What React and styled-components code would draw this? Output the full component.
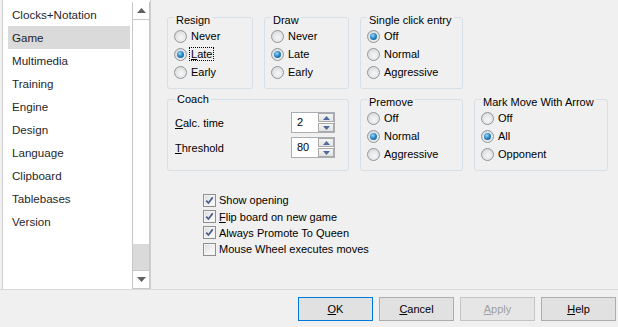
import React from 'react';
import styled, { createGlobalStyle, css } from 'styled-components';

const Global = createGlobalStyle`
  html, body {
    margin: 0;
    background: #f0f0f0;
    font-family: "Liberation Sans", Arial, sans-serif;
    font-size: 11px;
    color: #000;
  }
`;

const Window = styled.div`
  width: 618px;
  height: 327px;
  display: flex;
  flex-direction: column;
  overflow: hidden;
`;

const Main = styled.div`
  display: flex;
  height: 289px;
`;

const ListBox = styled.div`
  box-sizing: border-box;
  width: 149px;
  margin-left: 2px;
  border-left: 1px solid #cfcfcf;
  border-right: 1px solid #cfcfcf;
  background: #fff;
  display: flex;
`;

const Items = styled.div`
  width: 129px;
  box-sizing: border-box;
  padding: 3px 2px 0 5px;
  font-size: 11.6px;
`;

const Item = styled.div`
  height: 23px;
  line-height: 23px;
  padding-left: 4px;
  color: #1f1f2a;
  ${p => p.$selected && css`
    background: #dadada;
  `}
`;

const ScrollBar = styled.div`
  box-sizing: border-box;
  width: 18px;
  margin-top: 2px;
  border-left: 1px solid #c8c8c8;
  border-right: 1px solid #c8c8c8;
  display: flex;
  flex-direction: column;
`;

const ScrollButton = styled.div`
  height: 17px;
  display: flex;
  align-items: center;
  justify-content: center;
  border-top: 1px solid #c8c8c8;
  border-bottom: 1px solid #c8c8c8;
  ${p => p.$top && css`border-top: none;`}
`;

const Track = styled.div`
  flex: 1;
  display: flex;
  flex-direction: column;
  justify-content: flex-end;
`;

const Thumb = styled.div`
  height: 26px;
  background: #dadada;
`;

const Panel = styled.div`
  flex: 1;
  padding: 17px 0 0 16px;
`;

const Grid = styled.div`
  display: grid;
  grid-template-columns: 86px 85px 103px 134px;
  grid-auto-rows: 72px;
  column-gap: 11px;
  row-gap: 10px;
`;

const Group = styled.div`
  box-sizing: border-box;
  border: 1px solid #d5dfe5;
  border-radius: 3px;
  grid-column: span ${p => p.$span || 1};
  padding: ${p => p.$pad || '3px 6px 0'};
`;

const Title = styled.div`
  width: fit-content;
  margin: -7px 0 0 0;
  padding: 0 2px;
  background: #f0f0f0;
  line-height: 13px;
`;

const OptionRow = styled.div`
  display: flex;
  align-items: center;
  height: 18px;
  gap: 4px;
`;

const RadioDot = styled.span`
  box-sizing: border-box;
  width: 13px;
  height: 13px;
  border-radius: 50%;
  border: 1px solid #8d979c;
  background: radial-gradient(circle at 55% 60%, #f7f7f7 0%, #e4e4e4 55%, #cfcfcf 100%);
  display: flex;
  align-items: center;
  justify-content: center;
  flex: none;
  &::after {
    content: "";
    display: ${p => (p.$on ? 'block' : 'none')};
    width: 7px;
    height: 7px;
    border-radius: 50%;
    background: radial-gradient(circle at 40% 35%, #9fdcfb 0%, #2a8ac8 45%, #0c4b7e 100%);
  }
`;

const Label = styled.span`
  line-height: 12px;
  ${p => p.$focus && css`
    border: 1px dotted #000;
    padding: 0 1px;
    margin-left: -2px;
  `}
`;

const CoachRow = styled.div`
  display: flex;
  align-items: center;
  justify-content: space-between;
  height: 21px;
  margin-top: ${p => p.$gap || 4}px;
`;

const SpinBox = styled.div`
  box-sizing: border-box;
  width: 44px;
  height: 21px;
  border: 1px solid #abadb3;
  background: #fff;
  display: flex;
`;

const SpinValue = styled.div`
  flex: 1;
  padding-left: 5px;
  line-height: 19px;
`;

const SpinButtons = styled.div`
  width: 16px;
  display: flex;
  flex-direction: column;
  gap: 1px;
`;

const SpinButton = styled.div`
  box-sizing: border-box;
  flex: 1;
  border: 1px solid #a9a9a9;
  background: linear-gradient(#f5f5f5, #e2e2e2);
  display: flex;
  align-items: center;
  justify-content: center;
`;

const Checks = styled.div`
  margin-top: 21px;
  padding-left: 36px;
`;

const CheckRow = styled.div`
  display: flex;
  align-items: center;
  height: 16.4px;
  gap: 3px;
`;

const CheckBox = styled.span`
  box-sizing: border-box;
  width: 13px;
  height: 13px;
  border: 1px solid #8e8f8f;
  background: linear-gradient(135deg, #d8d8d8 0%, #f4f4f4 60%, #fcfcfc 100%);
  box-shadow: inset 0 0 0 1px #f4f4f4;
  display: flex;
  align-items: center;
  justify-content: center;
  flex: none;
`;

const ButtonBar = styled.div`
  border-top: 1px solid #d9d9d9;
  display: flex;
  justify-content: flex-end;
  gap: 6px;
  padding: 7px 2px 0 0;
`;

const Button = styled.div`
  box-sizing: border-box;
  width: 75px;
  height: 24px;
  border: 1px solid ${p => (p.$primary ? '#0078d7' : p.$disabled ? '#c4c4c4' : '#adadad')};
  background: ${p => (p.$disabled ? '#e6e6e6' : '#e1e1e1')};
  color: ${p => (p.$disabled ? '#a0a0a0' : '#000')};
  display: flex;
  align-items: center;
  justify-content: center;
`;

const Arrow = ({ up, color = '#606060', w = 9, h = 5 }) => (
  <svg width={w} height={h} viewBox="0 0 9 5">
    <polygon points={up ? '0,5 4.5,0 9,5' : '0,0 9,0 4.5,5'} fill={color} />
  </svg>
);

const Radio = ({ on, focus, children }) => (
  <OptionRow>
    <RadioDot $on={on} />
    <Label $focus={focus}>{children}</Label>
  </OptionRow>
);

const Check = ({ on, children }) => (
  <CheckRow>
    <CheckBox>
      {on && (
        <svg width="9" height="9" viewBox="0 0 9 9">
          <polyline points="1.2,4.6 3.4,7 7.8,1.4" fill="none" stroke="#4a5c8c" strokeWidth="1.7" />
        </svg>
      )}
    </CheckBox>
    <span>{children}</span>
  </CheckRow>
);

const Spin = ({ value }) => (
  <SpinBox>
    <SpinValue>{value}</SpinValue>
    <SpinButtons>
      <SpinButton><Arrow up color="#4d6a9a" w={7} h={4} /></SpinButton>
      <SpinButton><Arrow color="#4d6a9a" w={7} h={4} /></SpinButton>
    </SpinButtons>
  </SpinBox>
);

const pages = ['Clocks+Notation', 'Game', 'Multimedia', 'Training', 'Engine', 'Design', 'Language', 'Clipboard', 'Tablebases', 'Version'];

export default function App() {
  return (
    <Window>
      <Global />
      <Main>
        <ListBox>
          <Items>
            {pages.map(p => (
              <Item key={p} $selected={p === 'Game'}>{p}</Item>
            ))}
          </Items>
          <ScrollBar>
            <ScrollButton $top><Arrow up /></ScrollButton>
            <Track><Thumb /></Track>
            <ScrollButton><Arrow /></ScrollButton>
          </ScrollBar>
        </ListBox>
        <Panel>
          <Grid>
            <Group>
              <Title>Resign</Title>
              <Radio>Never</Radio>
              <Radio on focus><u>L</u>ate</Radio>
              <Radio>Early</Radio>
            </Group>
            <Group>
              <Title>Draw</Title>
              <Radio>Never</Radio>
              <Radio on>Late</Radio>
              <Radio>Early</Radio>
            </Group>
            <Group>
              <Title>Single click entry</Title>
              <Radio on>Off</Radio>
              <Radio>Normal</Radio>
              <Radio>Aggressive</Radio>
            </Group>
            <div />
            <Group $span={2} $pad="0 13px 0 7px">
              <Title>Coach</Title>
              <CoachRow $gap={6}>
                <span><u>C</u>alc. time</span>
                <Spin value="2" />
              </CoachRow>
              <CoachRow>
                <span><u>T</u>hreshold</span>
                <Spin value="80" />
              </CoachRow>
            </Group>
            <Group>
              <Title>Premove</Title>
              <Radio>Off</Radio>
              <Radio on>Normal</Radio>
              <Radio>Aggressive</Radio>
            </Group>
            <Group>
              <Title>Mark Move With Arrow</Title>
              <Radio>Off</Radio>
              <Radio on>All</Radio>
              <Radio>Opponent</Radio>
            </Group>
          </Grid>
          <Checks>
            <Check on>Show opening</Check>
            <Check on><u>F</u>lip board on new game</Check>
            <Check on>Always Promote To Queen</Check>
            <Check>Mouse Wheel executes moves</Check>
          </Checks>
        </Panel>
      </Main>
      <ButtonBar>
        <Button $primary><span><u>O</u>K</span></Button>
        <Button><span><u>C</u>ancel</span></Button>
        <Button $disabled><span><u>A</u>pply</span></Button>
        <Button><span><u>H</u>elp</span></Button>
      </ButtonBar>
    </Window>
  );
}
